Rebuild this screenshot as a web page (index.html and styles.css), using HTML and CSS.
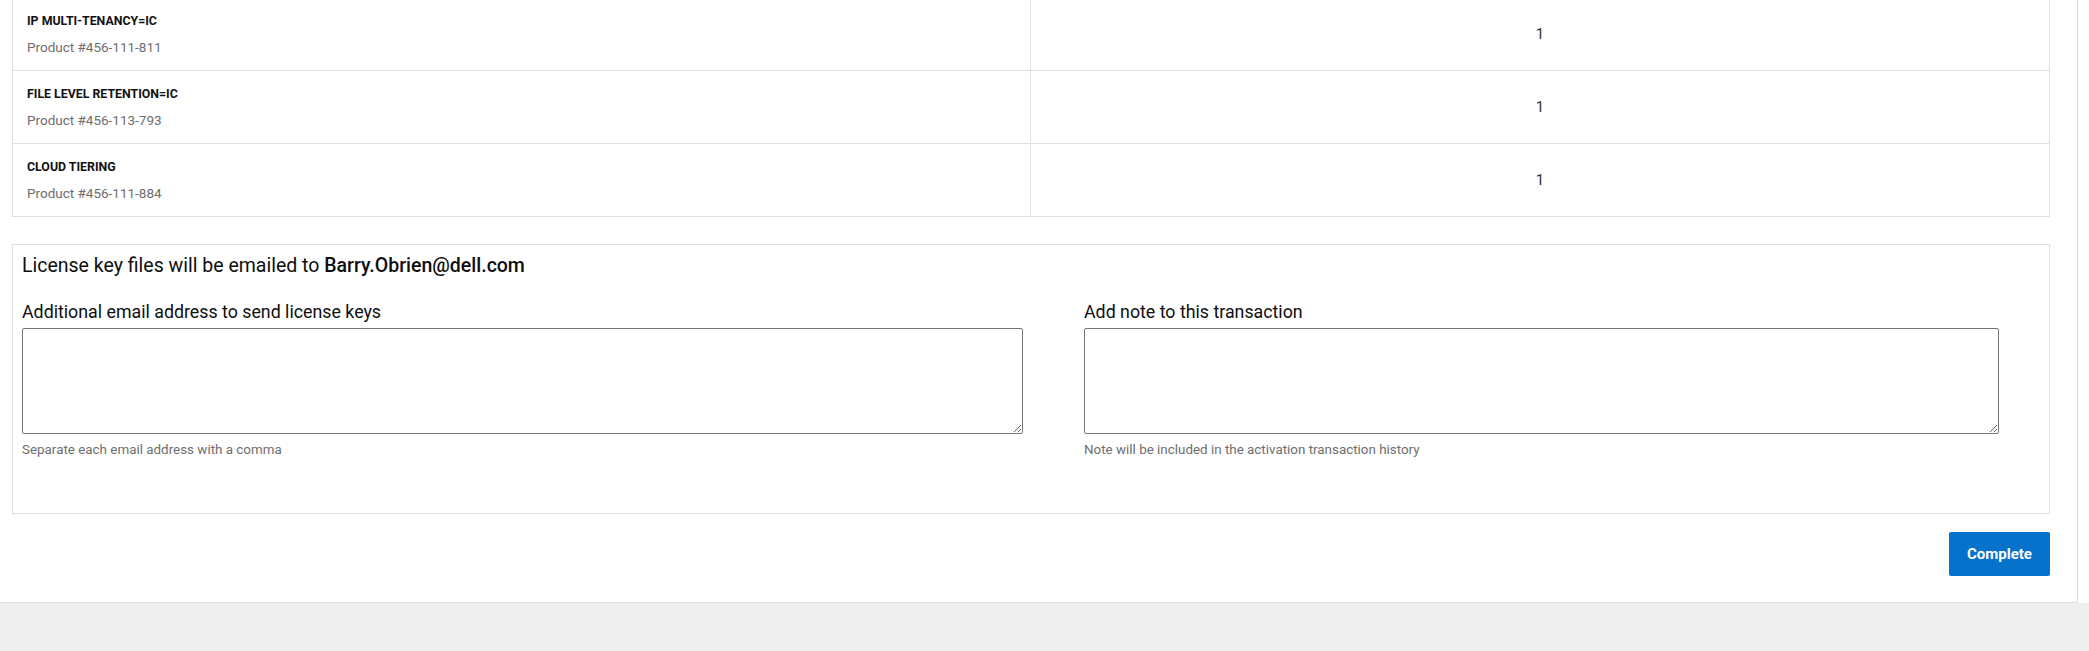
FILE: index.html
```html
<!DOCTYPE html>
<html lang="en">
<head>
<meta charset="utf-8">
<title>License activation</title>
<link rel="stylesheet" href="styles.css">
</head>
<body>
<div class="page">
  <div class="panel">
    <div class="products">
      <div class="row">
        <div class="cell cell-name">
          <div class="prod-title">IP MULTI-TENANCY=IC</div>
          <div class="prod-num">Product #456-111-811</div>
        </div>
        <div class="cell cell-qty">1</div>
      </div>
      <div class="row">
        <div class="cell cell-name">
          <div class="prod-title">FILE LEVEL RETENTION=IC</div>
          <div class="prod-num">Product #456-113-793</div>
        </div>
        <div class="cell cell-qty">1</div>
      </div>
      <div class="row">
        <div class="cell cell-name">
          <div class="prod-title">CLOUD TIERING</div>
          <div class="prod-num">Product #456-111-884</div>
        </div>
        <div class="cell cell-qty">1</div>
      </div>
    </div>

    <div class="email-box">
      <div class="email-heading">License key files will be emailed to <strong>Barry.Obrien@dell.com</strong></div>
      <div class="fields">
        <div class="field">
          <label class="field-label" for="emails">Additional email address to send license keys</label>
          <textarea id="emails" class="field-input"></textarea>
          <div class="field-help">Separate each email address with a comma</div>
        </div>
        <div class="field">
          <label class="field-label" for="note">Add note to this transaction</label>
          <textarea id="note" class="field-input"></textarea>
          <div class="field-help">Note will be included in the activation transaction history</div>
        </div>
      </div>
    </div>

    <div class="actions">
      <button class="btn-primary" type="button">Complete</button>
    </div>
  </div>
</div>
</body>
</html>
```
FILE: styles.css
```css
html, body {
  margin: 0;
  padding: 0;
}
body {
  background: #efefef;
  font-family: Roboto, "Noto Sans", "Liberation Sans", sans-serif;
  color: #0e0e0e;
}
.page {
  background: #ffffff;
}
.panel {
  width: 2078px;
  box-sizing: border-box;
  padding: 0 27px 26px 12px;
  border-right: 1px solid #dcdcdc;
  border-bottom: 1px solid #dcdcdc;
  display: flex;
  flex-direction: column;
}
.products {
  margin-top: -3px;
  border: 1px solid #e0e0e0;
}
.row {
  display: grid;
  grid-template-columns: 1fr 1fr;
  border-top: 1px solid #e0e0e0;
}
.row:first-child {
  border-top: 0;
}
.cell {
  min-height: 72px;
  box-sizing: border-box;
}
.cell-name {
  padding: 13px 14px;
  border-right: 1px solid #e0e0e0;
}
.cell-qty {
  display: flex;
  align-items: center;
  justify-content: center;
  font-size: 15px;
  color: #333;
}
.prod-title {
  font-size: 12.35px;
  line-height: 20px;
  font-weight: 700;
  color: #111;
}
.prod-num {
  margin-top: 6px;
  font-size: 13.5px;
  line-height: 20px;
  color: #6e6e6e;
}
.email-box {
  margin-top: 27px;
  border: 1px solid #e0e0e0;
  padding: 9px 9px 55px 9px;
}
.email-heading {
  font-size: 19.5px;
  line-height: 24px;
  color: #0e0e0e;
}
.email-heading strong {
  font-weight: 500;
}
.fields {
  margin-top: 22px;
  display: grid;
  grid-template-columns: 1001px 915px;
  column-gap: 61px;
}
.field {
  display: flex;
  flex-direction: column;
}
.field-label {
  font-size: 17.8px;
  line-height: 24px;
  color: #0e0e0e;
}
.field-input {
  display: block;
  margin: 4px 0 0 0;
  height: 106px;
  box-sizing: border-box;
  border: 1px solid #767676;
  border-radius: 2px;
  font-family: inherit;
  font-size: 14px;
  padding: 4px;
  resize: both;
}
.field-help {
  margin-top: 8px;
  font-size: 13.4px;
  line-height: 16px;
  color: #6e6e6e;
}
.actions {
  margin-top: 18px;
  display: flex;
  justify-content: flex-end;
}
.btn-primary {
  height: 44px;
  padding: 0 17px;
  min-width: 101px;
  background: #0672cb;
  color: #ffffff;
  border: 0;
  border-radius: 2px;
  font-family: Roboto, "Liberation Sans", sans-serif;
  font-size: 15px;
  font-weight: 700;
  cursor: pointer;
}
```
